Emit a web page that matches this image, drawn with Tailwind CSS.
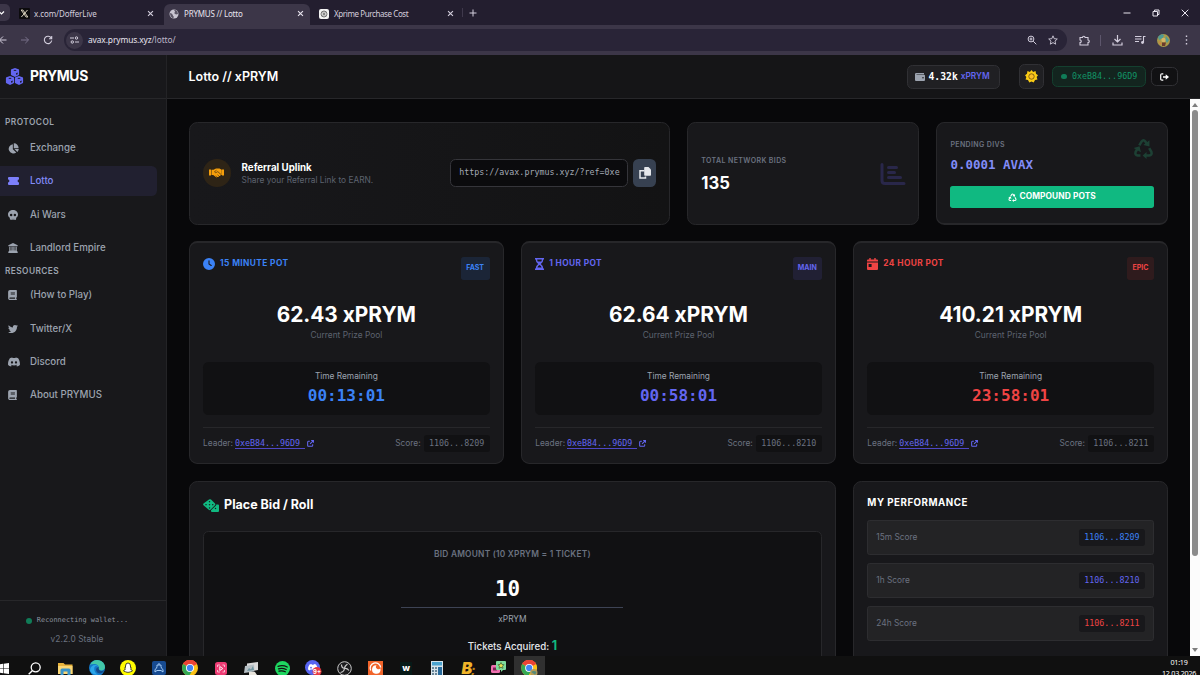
<!DOCTYPE html>
<html lang="en" class="text-[11.111px]">
<head>
<meta charset="utf-8">
<title>PRYMUS // Lotto</title>
<script src="https://cdn.jsdelivr.net/npm/@tailwindcss/browser@4"></script>
</head>
<body class="w-[1200px] h-[675px] overflow-hidden bg-[#09090b] font-['Inter',sans-serif] flex flex-col">
<svg class="hidden">
  <symbol id="book" viewBox="0 0 448 512"><path fill-rule="evenodd" d="M96 0C43 0 0 43 0 96v320c0 53 43 96 96 96h320c18 0 32-14 32-32s-14-32-32-32v-64c18 0 32-14 32-32V32c0-18-14-32-32-32H96zm0 384h256v64H96c-18 0-32-14-32-32s14-32 32-32zm32-240c0-9 7-16 16-16h192c9 0 16 7 16 16s-7 16-16 16H144c-9 0-16-7-16-16zm16 48h192c9 0 16 7 16 16s-7 16-16 16H144c-9 0-16-7-16-16s7-16 16-16z"/></symbol>
  <symbol id="ext" viewBox="0 0 16 16"><path d="M6.500 3H3.200A1.700 1.700 0 0 0 1.500 4.700v8.100a1.700 1.700 0 0 0 1.700 1.700h8.100a1.700 1.700 0 0 0 1.700-1.700V9.500M9.500 1.300h5.200v5.200M14.500 1.500L7 9" fill="none" stroke="currentColor" stroke-width="2.400"/></symbol>
  <symbol id="recycle" viewBox="0 0 24 24"><path d="M7.200 8.500L9.900 3.900Q12 1 14.100 3.900L16 7.200M18.500 11.500l2.500 4.300Q22.200 19.500 18.500 20H13M8.500 20H5.500Q1.800 19.500 3 15.800L5.300 12" fill="none" stroke="currentColor" stroke-width="2.900"/><path d="M18.800 2.500v7.200l-7-1.700zM15.500 16v8l-4.500-4zM.7 11.500l6.800-2 1.500 6.800z" fill="currentColor"/></symbol>
  <symbol id="cube" viewBox="0 0 10 11"><path d="M5 0l4.300 1.600q.7.300.7 1v5.200q0 .7-.7 1L5 11 .7 8.800q-.7-.3-.7-1V2.600q0-.7.7-1z" fill="currentColor"/><path d="M5 2l2.200.9L5 3.800l-2.200-.9zM6.300 6.400l1.900-.8v1.900l-1.900.9z" fill="#18181b"/></symbol>
  <symbol id="chrome" viewBox="0 0 24 24"><circle cx="12" cy="12" r="12" fill="#fbc116"/><path d="M12 12L1.600 6a12 12 0 0 1 20.800 0z" fill="#ea4335"/><path d="M12 12L1.600 6a12 12 0 0 0 9 17.900L16 15z" fill="#34a853"/><path d="M1.600 6A12 12 0 0 1 22.400 6H12z" fill="#ea4335"/><circle cx="12" cy="12" r="6" fill="#fff"/><circle cx="12" cy="12" r="4.700" fill="#4285f4"/></symbol>
  <symbol id="x" viewBox="0 0 10 10"><path d="M1.500 1.500l7 7M8.500 1.500l-7 7" stroke="currentColor" stroke-width="1.600"/></symbol>
</svg>

<!-- Browser tab strip -->
<div class="h-[25px] shrink-0 bg-[#231e2f] flex items-end text-[8px] text-[#d3cedd] font-['Noto_Sans',sans-serif] tracking-[-0.1px]">
  <div class="w-[10px] h-[17px] mb-[4px] rounded-r-[5px] bg-[#3c3648] flex items-center"><svg class="w-[6px] h-[6px]" viewBox="0 0 6 6"><path d="M-1 1.500L1.500 4 4 1.500" fill="none" stroke="#fff" stroke-width="1.200"/></svg></div>
  <div class="w-[154px] h-[21px] pb-[2px] pl-[9px] pr-[10px] flex items-center">
    <svg class="w-[11px] h-[11px] mr-[4px]" viewBox="0 0 11 11"><rect width="11" height="11" rx="1" fill="#0c0b0d"/><path d="M2.200 2h1.700l4.900 7H7.100zM8.500 2L2.400 9" fill="none" stroke="#d8d0bc" stroke-width="1"/></svg>
    <span class="grow">x.com/DofferLive</span>
    <svg class="w-[7px] h-[7px]"><use href="#x"/></svg>
  </div>
  <div class="w-[146px] h-[21px] pb-[2px] pl-[5px] pr-[6px] flex items-center bg-[#3c3648] rounded-t-[6px] text-[#e8e4ee]">
    <svg class="w-[10px] h-[10px] mr-[5px]" viewBox="0 0 10 10"><circle cx="5" cy="5" r="4.500" fill="#c9c6d2"/><path d="M1 4q2 0 2.500 1.500T5 8l-1 1.300Q1 8 1 4zM5 1q2 2 0 3l2 1.500L9 5Q9 2 6.500 1z" fill="#5b5666"/></svg>
    <span class="grow tracking-[-0.2px]">PRYMUS // Lotto</span>
    <svg class="w-[7px] h-[7px]"><use href="#x"/></svg>
  </div>
  <div class="w-[152px] h-[21px] pb-[2px] pl-[9px] pr-[8px] flex items-center">
    <svg class="w-[10px] h-[10px] mr-[5px]" viewBox="0 0 10 10"><rect width="10" height="10" rx="2" fill="#f3f3f3"/><circle cx="5" cy="5" r="3" fill="none" stroke="#555" stroke-width=".8"/><path d="M3 3.500l4 3M5 2.500v5M3 6.500l4-3" stroke="#555" stroke-width=".6"/></svg>
    <span class="grow tracking-[-0.4px]">Xprime Purchase Cost</span>
    <svg class="w-[7px] h-[7px]"><use href="#x"/></svg>
  </div>
  <div class="w-px h-[9px] mb-[8px] bg-[#3f394c]"></div>
  <svg class="w-[8px] h-[8px] mb-[8px] ml-[6px]" viewBox="0 0 8 8"><path d="M4 .5v7M.5 4h7" stroke="#d3cedd" stroke-width="1"/></svg>
  <div class="grow"></div>
  <div class="h-[25px] flex items-center gap-[21px] pr-[11px]">
    <svg class="w-[8px] h-[8px]" viewBox="0 0 8 8"><path d="M.5 4h7" stroke="#e8e4ee"/></svg>
    <svg class="w-[8px] h-[8px]" viewBox="0 0 8 8"><path d="M1 2.500h4.500V7H1zM2.500 2.500V1H7v4.500H5.500" fill="none" stroke="#e8e4ee"/></svg>
    <svg class="w-[8px] h-[8px]" viewBox="0 0 8 8"><path d="M.7.7l6.600 6.600M7.300.7L.7 7.300" stroke="#e8e4ee"/></svg>
  </div>
</div>

<!-- Address bar -->
<div class="h-[30px] shrink-0 bg-[#3c3648] flex items-center text-[#d3cedd] font-['Noto_Sans',sans-serif]">
  <svg class="w-[8px] h-[10px] -ml-[1px]" viewBox="0 0 8 10"><path d="M7.500 5H1M4 1.500L.5 5 4 8.500" fill="none" stroke="currentColor"/></svg>
  <svg class="w-[10px] h-[10px] ml-[13px] text-[#78718a]" viewBox="0 0 10 10"><path d="M1 5h7.500M5.300 1.800L8.500 5 5.300 8.200" fill="none" stroke="currentColor"/></svg>
  <svg class="w-[10px] h-[10px] ml-[13px]" viewBox="0 0 10 10"><path d="M8.200 3A3.700 3.700 0 1 0 8.700 5.500M8.700 1v2.700H6" fill="none" stroke="currentColor" stroke-width="1.100"/></svg>
  <div class="ml-[11px] w-[1003px] h-[22px] rounded-full bg-[#292437] flex items-center pl-[2px] pr-[9px]">
    <div class="w-[17px] h-[17px] rounded-full bg-[#3c3648] flex items-center justify-center"><svg class="w-[9px] h-[8px]" viewBox="0 0 9 8"><path d="M0 2h4M5 6h4" stroke="currentColor"/><circle cx="6.500" cy="2" r="1.200" fill="none" stroke="currentColor"/><circle cx="2.300" cy="6" r="1.200" fill="none" stroke="currentColor"/></svg></div>
    <span class="ml-[5px] text-[8.400px] tracking-[-0.1px] grow text-[#e8e4ee]">avax.prymus.xyz<span class="text-[#bcb6c8]">/lotto/</span></span>
    <svg class="w-[10px] h-[10px]" viewBox="0 0 10 10"><circle cx="4" cy="4" r="2.900" fill="none" stroke="currentColor"/><path d="M6.200 6.200L9.300 9.300M2.500 4h3M4 2.500v3" stroke="currentColor" stroke-width="1"/></svg>
    <svg class="w-[10px] h-[10px] ml-[11px]" viewBox="0 0 10 10"><path d="M5 .8l1.200 2.900 3.100.3L7 6.100l.7 3.100L5 7.600 2.300 9.200 3 6.100.7 4l3.100-.3z" fill="none" stroke="currentColor" stroke-width=".9"/></svg>
  </div>
  <svg class="w-[11px] h-[11px] ml-[12px]" viewBox="0 0 11 11"><path d="M1 2.500h2.500a1.300 1.300 0 0 1 2.600 0H9V5a1.300 1.300 0 0 1 0 2.600V10H1V7.600a1.300 1.300 0 0 0 0-2.600z" fill="none" stroke="currentColor" stroke-width="1.100"/></svg>
  <div class="w-px h-[11px] ml-[10px] bg-[#5d566c]"></div>
  <svg class="w-[11px] h-[11px] ml-[11px]" viewBox="0 0 11 11"><path d="M5.500 0v6.500M2.500 4l3 3 3-3M1 7.500V10h9V7.500" fill="none" stroke="currentColor" stroke-width="1.200"/></svg>
  <svg class="w-[11px] h-[10px] ml-[12px]" viewBox="0 0 11 10"><path d="M0 1.500h6.500M0 4h6.500M0 6.500h4M8.500 7.500V1.500h2" fill="none" stroke="currentColor" stroke-width="1.100"/><circle cx="7.500" cy="7.500" r="1.400" fill="currentColor"/></svg>
  <svg class="w-[13px] h-[13px] ml-[11px]" viewBox="0 0 13 13"><circle cx="6.500" cy="6.500" r="6.500" fill="#a99a4a"/><path d="M1 3q3-4 6-2L6 4 2 6zM9 2l3 4-2 3-2-3z" fill="#4f9a93"/><circle cx="6.500" cy="6" r="2.200" fill="#d6b565"/><path d="M5 8.500h4l-1 3.500H5z" fill="#6b3b2c"/><path d="M1.500 7l3 2-1 2z" fill="#d9803e"/></svg>
  <svg class="w-[3px] h-[10px] ml-[15px]" viewBox="0 0 3 10"><path d="M.8.500h1.400v1.400H.8zM.8 4.300h1.400v1.400H.8zM.8 8.100h1.400v1.400H.8z" fill="currentColor"/></svg>
</div>

<!-- Application -->
<div class="h-[601px] shrink-0 flex overflow-hidden">
  <aside class="w-[167px] shrink-0 bg-[#18181b] border-r border-[#232326] flex flex-col text-[#9ca3af]">
    <div class="h-[44px] shrink-0 border-b border-[#27272a] flex items-center pl-[5px] text-white">
      <div class="w-[19px] flex flex-col items-center text-[#6366f1]">
        <svg class="w-[10px] h-[9px]"><use href="#cube"/></svg>
        <div class="flex -mt-[1px]"><svg class="w-[10px] h-[9px]"><use href="#cube"/></svg><svg class="w-[10px] h-[9px] -ml-px"><use href="#cube"/></svg></div>
      </div>
      <span class="ml-[6px] pt-[1px] text-xl font-bold tracking-[-0.35px]">PRYMUS</span>
    </div>
    <div class="h-[34px] pt-[17px] pl-[5px] text-xs leading-[13px] font-semibold tracking-[0.45px]">PROTOCOL</div>
    <nav class="flex flex-col gap-[3.400px] text-sm font-medium">
      <a class="h-[30px] flex items-center"><span class="w-[30px] pl-[8px]"><svg class="w-[11px] h-[11px]" viewBox="0 0 12 12" fill="currentColor"><path d="M5.300 1.300v5.400l3.700 3.700A5.100 5.100 0 1 1 5.300 1.300zM6.300.3a5 5 0 0 1 5.200 5.300H6.300zM7 6.600h4.800a5 5 0 0 1-1.600 3.200z"/></svg></span>Exchange</a>
      <a class="h-[30px] w-[157px] rounded-r-[5.500px] bg-[#212030] text-[#818cf8] flex items-center"><span class="w-[30px] pl-[8px]"><svg class="w-[11px] h-[8px]" viewBox="0 0 11 8" fill="#7c7ffa"><path d="M1 0h9q1 0 1 1v1.600a1.400 1.400 0 0 0 0 2.800V7q0 1-1 1H1Q0 8 0 7V5.400a1.400 1.400 0 0 0 0-2.800V1q0-1 1-1z"/></svg></span>Lotto</a>
      <a class="h-[30px] flex items-center"><span class="w-[30px] pl-[8px]"><svg class="w-[10px] h-[10px]" viewBox="0 0 512 512" fill="currentColor"><path fill-rule="evenodd" d="M416 398c58-42 96-104 96-174C512 100 397 0 256 0S0 100 0 224c0 70 38 132 96 174v66c0 26 22 48 48 48h48v-48c0-9 7-16 16-16s16 7 16 16v48h64v-48c0-9 7-16 16-16s16 7 16 16v48h48c26 0 48-22 48-48v-66zM96 256a64 64 0 1 1 128 0 64 64 0 1 1-128 0zm256-64a64 64 0 1 1 0 128 64 64 0 1 1 0-128z"/></svg></span>Ai Wars</a>
      <a class="h-[30px] flex items-center"><span class="w-[30px] pl-[8px]"><svg class="w-[10px] h-[10px]" viewBox="0 0 16 16" fill="currentColor"><path d="M8 0l7.500 3.500V5H.5V3.500zM2 6h2v6h1.500V6h2v6h1V6h2v6H12V6h2v6.500l1.500 1.500v2H.5v-2L2 12.500z"/></svg></span>Landlord Empire</a>
    </nav>
    <div class="h-[17px] pt-[2px] pl-[5px] text-xs leading-[13px] font-semibold tracking-[0.4px]">RESOURCES</div>
    <nav class="flex flex-col gap-[3.400px] text-sm font-medium">
      <a class="h-[30px] flex items-center"><span class="w-[30px] pl-[8px]"><svg class="w-[9px] h-[10px]" fill="currentColor"><use href="#book"/></svg></span>(How to Play)</a>
      <a class="h-[30px] flex items-center"><span class="w-[30px] pl-[8px]"><svg class="w-[10px] h-[10px]" viewBox="0 0 512 512" fill="currentColor"><path d="M459.370 151.716c.325 4.548.325 9.097.325 13.645 0 138.720-105.583 298.558-298.558 298.558-59.452 0-114.680-17.219-161.137-47.106 8.447.974 16.568 1.299 25.340 1.299 49.055 0 94.213-16.568 130.274-44.832-46.132-.975-84.792-31.188-98.112-72.772 6.498.974 12.995 1.624 19.818 1.624 9.421 0 18.843-1.300 27.614-3.573-48.081-9.747-84.143-51.980-84.143-102.985v-1.299c13.969 7.797 30.214 12.670 47.431 13.319-28.264-18.843-46.781-51.005-46.781-87.391 0-19.492 5.197-37.360 14.294-52.954 51.655 63.675 129.300 105.258 216.365 109.807-1.624-7.797-2.599-15.918-2.599-24.040 0-57.828 46.782-104.934 104.934-104.934 30.213 0 57.502 12.670 76.670 33.137 23.715-4.548 46.456-13.320 66.599-25.340-7.798 24.366-24.366 44.833-46.132 57.827 21.117-2.273 41.584-8.122 60.426-16.243-14.292 20.791-32.161 39.308-52.628 54.253z"/></svg></span>Twitter/X</a>
      <a class="h-[30px] flex items-center"><span class="w-[30px] pl-[8px]"><svg class="w-[12px] h-[10px]" viewBox="0 0 24 20" fill="currentColor"><path fill-rule="evenodd" d="M20.300 2.400A19 19 0 0 0 15.400.9l-.7 1.300a18 18 0 0 0-5.400 0L8.600.9a19 19 0 0 0-4.900 1.500C.6 7-.3 11.600.2 16a20 20 0 0 0 6 3l1.200-2-1.900-.9.500-.4a14 14 0 0 0 12 0l.5.400-1.900.9 1.200 2a20 20 0 0 0 6-3c.5-5.200-.9-9.700-3.500-13.600zM8 13.300c-1.200 0-2.200-1.100-2.200-2.400S6.800 8.500 8 8.500s2.200 1.100 2.200 2.400-1 2.400-2.200 2.400zm8 0c-1.200 0-2.200-1.100-2.200-2.400s1-2.400 2.200-2.400 2.200 1.100 2.200 2.400-1 2.400-2.200 2.400z"/></svg></span>Discord</a>
      <a class="h-[30px] flex items-center"><span class="w-[30px] pl-[8px]"><svg class="w-[9px] h-[10px]" fill="currentColor"><use href="#book"/></svg></span>About PRYMUS</a>
    </nav>
    <div class="mt-auto h-[56px] border-t border-[#27272a] flex flex-col items-center pt-[13px] pr-[12px]">
      <div class="h-[13px] flex items-center gap-[5px] font-['DejaVu_Sans_Mono',monospace] text-[6.900px] font-medium text-[#8b919d]"><span class="w-[6px] h-[6px] rounded-full bg-[#107c58]"></span>Reconnecting wallet...</div>
      <div class="mt-[6px] text-xs leading-[13px] text-[#6b7280] tracking-[0.1px]">v2.2.0 Stable</div>
    </div>
  </aside>

  <div class="grow flex flex-col min-w-0">
    <header class="h-[44px] shrink-0 bg-[#151517] border-b border-[#27272a] flex items-center pl-[21.500px] pr-[22px] text-white">
      <h1 class="text-lg font-semibold grow pt-px">Lotto // xPRYM</h1>
      <div class="w-[93px] h-[24px] rounded-[5.500px] border border-[#303034] bg-[#202023] flex items-center pl-[7px] mr-[19.500px]">
        <svg class="w-[10px] h-[8px] mr-[4px]" viewBox="0 0 10 8"><path d="M1.200 0H9v1.200H1.500v.5H9q1 0 1 1V7q0 1-1 1H1Q0 8 0 7V1.200Q0 0 1.200 0z" fill="#9ca3af"/><circle cx="8" cy="4.800" r=".8" fill="#202023"/></svg>
        <span class="font-['DejaVu_Sans_Mono',monospace] font-bold text-sm">4.32k</span><span class="ml-[3px] text-xs font-semibold text-[#6366f1]">xPRYM</span>
      </div>
      <div class="w-[25px] h-[25px] rounded-[5.500px] border border-[#303034] bg-[#202023] flex items-center justify-center mr-[8px]">
        <svg class="w-[13px] h-[13px]" viewBox="0 0 24 24"><path d="M12 0l3 3.800L19.500 2l.800 4.800L24 9.500 21.500 13l1.500 4.500-4.500 1L16 23l-4-2-4 2-2.500-4.500-4.500-1L2.500 13 0 9.500l3.700-2.700L4.500 2 9 3.800z" fill="#facc15"/><circle cx="12" cy="12" r="5" fill="#fbbf24" stroke="#5a4208" stroke-width="1.300"/></svg>
      </div>
      <div class="w-[94px] h-[21px] rounded-[5.500px] border border-[#14402f] bg-[#13251f] flex items-center pl-[8px] mr-[5px] font-['DejaVu_Sans_Mono',monospace] text-xs text-[#129467]"><span class="w-[5.500px] h-[5.500px] rounded-full bg-[#107c58] mr-[5.500px]"></span>0xeB84...96D9</div>
      <div class="w-[27px] h-[19px] rounded-[5.500px] border border-[#303034] bg-[#111113] flex items-center justify-center">
        <svg class="w-[9px] h-[8px]" viewBox="0 0 9 8"><path d="M3.300.800H2Q.7.800.7 2v4Q.7 7.200 2 7.200h1.300" fill="none" stroke="#fff" stroke-width="1.200"/><path d="M3 3.200h2.700V1.200L9 4 5.700 6.800v-2H3z" fill="#fff"/></svg>
      </div>
    </header>

    <div class="grow flex min-h-0">
      <main class="grow bg-[#08080a] pl-[21.600px] pr-[21.600px] pt-[23px] flex flex-col overflow-hidden">
        <!-- Summary cards -->
        <section class="h-[103px] shrink-0 grid grid-cols-4 gap-[16.600px]">
          <div class="col-span-2 rounded-xl border border-[#27272a] bg-linear-to-r from-[#18181b] to-[#131314] flex items-center px-[13px] pb-px">
            <div class="w-[28px] h-[28px] rounded-full bg-[#2e2416] flex items-center justify-center shrink-0">
              <svg class="w-[15px] h-[10px]" viewBox="0 0 30 20"><path d="M0 3h4v12H0zM26 3h4v12h-4z" fill="#f59e0b"/><path d="M5 3.500h4L14 1h7l4.500 2.500V14h-2.300l-.7 1.800-2.200.4-1.400 1.900-2.400-.2-1.500 1.300L8.500 14H5z" fill="#f59e0b"/><path d="M15 4.500L11 7.500q1.500 3 4.500 1l2-1.300L24 13M13.500 15.500l2 1.800M17 13.500l2.500 2" fill="none" stroke="#2e2416" stroke-width="1.300"/></svg>
            </div>
            <div class="ml-[11px] grow">
              <div class="text-sm leading-[13px] font-bold text-white">Referral Uplink</div>
              <div class="text-xs leading-[12px] text-[#5d636f]">Share your Referral Link to EARN.</div>
            </div>
            <div class="w-[178px] h-[28px] rounded-[5.500px] border border-[#35353a] bg-[#0b0b0d] flex items-center pl-[8px] font-['DejaVu_Sans_Mono',monospace] text-xs text-[#a3a9b4] whitespace-nowrap">https://avax.prymus.xyz/?ref=0xe</div>
            <div class="ml-[5px] w-[23px] h-[28px] rounded-[5.500px] bg-[#374151] flex items-center justify-center">
              <svg class="w-[12px] h-[12px]" viewBox="0 0 12 12"><path d="M5.500 3.700H1V11h5.500V9.500" fill="none" stroke="#e5e7eb" stroke-width="1.500"/><path d="M6 0h3.500L12 2.500V8q0 .8-.8.8H6q-.8 0-.8-.8V.800Q5.200 0 6 0z" fill="#e5e7eb"/></svg>
            </div>
          </div>
          <div class="rounded-xl border border-[#27272a] bg-[#18181b] flex items-center pl-[13.500px] pr-[12.500px]">
            <div class="grow"><div class="text-[7px] leading-[11px] font-semibold tracking-[0.38px] text-[#6b7280]">TOTAL NETWORK BIDS</div>
            <div class="mt-[7px] text-2xl leading-[20px] font-bold text-white">135</div></div>
            <svg class="w-[26px] h-[22px]" viewBox="0 0 25 22"><path d="M1.500 1.500v16q0 3 3 3H23.500M8 4.500h8M8 9.500h6M8 14.500h12" fill="none" stroke="#29274a" stroke-width="3" stroke-linecap="round"/></svg>
          </div>
          <div class="rounded-xl border border-b-2 border-[#27272a] bg-[#18181b] px-[13.500px] pt-[15px]">
            <div class="flex justify-between h-[48px]">
              <div><div class="pt-[2px] text-[7px] leading-[10px] font-semibold tracking-[0.38px] text-[#6b7280]">PENDING DIVS</div>
              <div class="mt-[6px] font-['DejaVu_Sans_Mono',monospace] text-lg leading-[18px] font-bold text-[#818cf8]">0.0001 AVAX</div></div>
              <svg class="w-[21px] h-[21px] text-[#1d4034]"><use href="#recycle"/></svg>
            </div>
            <div class="h-[22px] rounded-[2.700px] bg-[#10b981] flex items-center justify-center gap-[2px] text-xs font-bold tracking-[0.1px] text-white"><svg class="w-[9px] h-[9px]"><use href="#recycle"/></svg>COMPOUND POTS</div>
          </div>
        </section>

        <!-- Prize pots -->
        <section class="mt-[16px] h-[223px] shrink-0 grid grid-cols-3 gap-[16.600px]">
          <div class="rounded-xl border border-t-2 border-[#27272a] bg-[#18181b] px-[13.500px] pt-[14px] flex flex-col">
            <div class="h-[23px] flex justify-between text-[#3b82f6]">
              <div class="h-[13px] flex items-center gap-[5px] text-xs font-bold tracking-[0.4px]"><svg class="w-[12px] h-[12px]" viewBox="0 0 512 512" fill="currentColor"><path fill-rule="evenodd" d="M256 0a256 256 0 1 1 0 512A256 256 0 1 1 256 0zM232 120V256c0 8 4 15.500 10.700 20l96 64c11 7.400 25.900 4.400 33.300-6.700s4.400-25.900-6.700-33.300L280 243.200V120c0-13.300-10.700-24-24-24s-24 10.700-24 24z"/></svg>15 MINUTE POT</div>
              <div class="w-[29px] h-[23px] rounded-[2.700px] bg-[#1b2537] flex items-center justify-center text-[7px] font-bold">FAST</div>
            </div>
            <div class="mt-[21px] h-[28px] leading-[28px] text-center text-[20.830px] font-bold text-white">62.43 xPRYM</div>
            <div class="text-center text-xs leading-[13px] text-[#5d636f]">Current Prize Pool</div>
            <div class="mt-[20px] h-[53px] shrink-0 rounded-[5.500px] bg-[#111113] text-center pt-[8px]">
              <div class="text-xs leading-[13px] text-[#9ca3af]">Time Remaining</div>
              <div class="font-['DejaVu_Sans_Mono',monospace] text-[16px] leading-[26px] font-bold text-[#3b82f6]">00:13:01</div>
            </div>
            <div class="mt-[12px] border-t border-[#27272a] pt-[7px] flex justify-between text-xs text-[#6b7280]">
              <div class="h-[17px] flex items-center">Leader:<span class="ml-[2px] w-[70px] h-[11px] border-b border-[#4f46c5] leading-[11px] font-['DejaVu_Sans_Mono',monospace] text-[#6366f1]">0xeB84...96D9</span><svg class="w-[7px] h-[7px] ml-[2px] text-[#6366f1]"><use href="#ext"/></svg></div>
              <div class="h-[17px] flex items-center">Score:<span class="ml-[3px] w-[66px] h-[17px] leading-[17px] text-center rounded-[2.700px] bg-[#111113] font-['DejaVu_Sans_Mono',monospace]">1106...8209</span></div>
            </div>
          </div>
          <div class="rounded-xl border border-t-2 border-[#27272a] bg-[#18181b] px-[13.500px] pt-[14px] flex flex-col">
            <div class="h-[23px] flex justify-between text-[#6366f1]">
              <div class="h-[13px] flex items-center gap-[5px] text-xs font-bold tracking-[0.4px]"><svg class="w-[9px] h-[12px]" viewBox="0 0 9 12" fill="currentColor"><path fill-rule="evenodd" d="M0 0h9v1.500H8.300Q8.300 4.500 5.800 6q2.500 1.500 2.500 4.500H9V12H0v-1.500h.7Q.7 7.500 3.200 6 .7 4.500.7 1.500H0zM2.200 1.500q0 1 .5 1.900h3.600q.5-.9.5-1.900zM4.500 6.900Q2.900 7.500 2.400 9.500h4.200Q6.100 7.500 4.500 6.900z"/></svg>1 HOUR POT</div>
              <div class="w-[29px] h-[23px] rounded-[2.700px] bg-[#212034] flex items-center justify-center text-[7px] font-bold">MAIN</div>
            </div>
            <div class="mt-[21px] h-[28px] leading-[28px] text-center text-[20.830px] font-bold text-white">62.64 xPRYM</div>
            <div class="text-center text-xs leading-[13px] text-[#5d636f]">Current Prize Pool</div>
            <div class="mt-[20px] h-[53px] shrink-0 rounded-[5.500px] bg-[#111113] text-center pt-[8px]">
              <div class="text-xs leading-[13px] text-[#9ca3af]">Time Remaining</div>
              <div class="font-['DejaVu_Sans_Mono',monospace] text-[16px] leading-[26px] font-bold text-[#6366f1]">00:58:01</div>
            </div>
            <div class="mt-[12px] border-t border-[#27272a] pt-[7px] flex justify-between text-xs text-[#6b7280]">
              <div class="h-[17px] flex items-center">Leader:<span class="ml-[2px] w-[70px] h-[11px] border-b border-[#4f46c5] leading-[11px] font-['DejaVu_Sans_Mono',monospace] text-[#6366f1]">0xeB84...96D9</span><svg class="w-[7px] h-[7px] ml-[2px] text-[#6366f1]"><use href="#ext"/></svg></div>
              <div class="h-[17px] flex items-center">Score:<span class="ml-[3px] w-[66px] h-[17px] leading-[17px] text-center rounded-[2.700px] bg-[#111113] font-['DejaVu_Sans_Mono',monospace]">1106...8210</span></div>
            </div>
          </div>
          <div class="rounded-xl border border-t-2 border-[#27272a] bg-[#18181b] px-[13.500px] pt-[14px] flex flex-col">
            <div class="h-[23px] flex justify-between text-[#ef4444]">
              <div class="h-[13px] flex items-center gap-[5px] text-xs font-bold tracking-[0.4px]"><svg class="w-[11px] h-[12px]" viewBox="0 0 11 12" fill="currentColor"><path fill-rule="evenodd" d="M2.300 0h1.400v1.500h3.600V0h1.400v1.500H10q1 0 1 1v1H0v-1q0-1 1-1h1.300zM0 4.500h11V11q0 1-1 1H1q-1 0-1-1zM1.600 6v3h3V6z"/></svg>24 HOUR POT</div>
              <div class="w-[27px] h-[23px] rounded-[2.700px] bg-[#2f1b1d] flex items-center justify-center text-[7px] font-bold">EPIC</div>
            </div>
            <div class="mt-[21px] h-[28px] leading-[28px] text-center text-[20.830px] font-bold text-white">410.21 xPRYM</div>
            <div class="text-center text-xs leading-[13px] text-[#5d636f]">Current Prize Pool</div>
            <div class="mt-[20px] h-[53px] shrink-0 rounded-[5.500px] bg-[#111113] text-center pt-[8px]">
              <div class="text-xs leading-[13px] text-[#9ca3af]">Time Remaining</div>
              <div class="font-['DejaVu_Sans_Mono',monospace] text-[16px] leading-[26px] font-bold text-[#ef4444]">23:58:01</div>
            </div>
            <div class="mt-[12px] border-t border-[#27272a] pt-[7px] flex justify-between text-xs text-[#6b7280]">
              <div class="h-[17px] flex items-center">Leader:<span class="ml-[2px] w-[70px] h-[11px] border-b border-[#4f46c5] leading-[11px] font-['DejaVu_Sans_Mono',monospace] text-[#6366f1]">0xeB84...96D9</span><svg class="w-[7px] h-[7px] ml-[2px] text-[#6366f1]"><use href="#ext"/></svg></div>
              <div class="h-[17px] flex items-center">Score:<span class="ml-[3px] w-[66px] h-[17px] leading-[17px] text-center rounded-[2.700px] bg-[#111113] font-['DejaVu_Sans_Mono',monospace]">1106...8211</span></div>
            </div>
          </div>
        </section>

        <!-- Bid form and personal scores -->
        <section class="mt-[16.500px] h-[240px] shrink-0 grid grid-cols-3 gap-[16.600px]">
          <div class="col-span-2 rounded-xl border border-[#27272a] bg-[#18181b] px-[13.500px] pt-[13.500px]">
            <div class="h-[20px] flex items-center gap-[5px] text-lg font-bold text-white">
              <svg class="w-[16px] h-[13px]" viewBox="0 0 32 26"><path fill-rule="evenodd" d="M12 1q2-1.500 4 0l8 8q1.500 1.500 0 3.500l-9 9q-1.500 1.500-3.500 0L1 12.500Q-.5 11 1 9zM13 4a1.300 1.300 0 1 0 .1 0zM6 10a1.300 1.300 0 1 0 .1 0zM13 10a1.300 1.300 0 1 0 .1 0zM19.500 10a1.300 1.300 0 1 0 .1 0zM13 16.500a1.300 1.300 0 1 0 .1 0z" fill="#10b981"/><path fill-rule="evenodd" d="M26.500 11H30q2 0 2 2v11q0 2-2 2H18q-2 0-2-2v-1.500l9.500-9q1-1 1-2.500zM25 17.500a1.300 1.300 0 1 0 .1 0z" fill="#10b981"/></svg>Place Bid / Roll
            </div>
            <div class="mt-[15.500px] h-[200px] rounded-[5.500px] border border-[#27272a] bg-[#111113] flex flex-col items-center pt-[16px]">
              <div class="text-xs leading-[13px] font-semibold text-[#6b7280] tracking-[0.230px]">BID AMOUNT (10 XPRYM = 1 TICKET)</div>
              <div class="mt-[11px] w-[222px] h-[36px] pr-[10px] border-b border-[#3d4354] text-center font-['DejaVu_Sans_Mono',monospace] text-[20.830px] leading-[35px] font-bold text-white">10</div>
              <div class="mt-[5px] text-xs leading-[13px] text-[#9ca3af]">xPRYM</div>
              <div class="mt-[12px] text-sm leading-[16px] font-medium text-[#e5e7eb]">Tickets Acquired: <span class="text-lg leading-[16px] font-bold text-[#10b981]">1</span></div>
            </div>
          </div>
          <div class="rounded-xl border border-[#27272a] bg-[#18181b] px-[13.500px] pt-[14px] text-xs text-[#6b7280]">
            <div class="text-sm leading-[13px] font-bold tracking-[0.5px] text-white">MY PERFORMANCE</div>
            <div class="mt-[11.500px] flex flex-col gap-[8px]">
              <div class="h-[35px] rounded-[2.700px] border border-[#2d2d30] bg-[#232325] flex items-center justify-between px-[8px]">15m Score<span class="w-[66px] h-[17px] leading-[17px] text-center rounded-[2.700px] bg-[#18181b] font-['DejaVu_Sans_Mono',monospace] text-[#3b82f6]">1106...8209</span></div>
              <div class="h-[35px] rounded-[2.700px] border border-[#2d2d30] bg-[#232325] flex items-center justify-between px-[8px]">1h Score<span class="w-[66px] h-[17px] leading-[17px] text-center rounded-[2.700px] bg-[#18181b] font-['DejaVu_Sans_Mono',monospace] text-[#6366f1]">1106...8210</span></div>
              <div class="h-[35px] rounded-[2.700px] border border-[#2d2d30] bg-[#232325] flex items-center justify-between px-[8px]">24h Score<span class="w-[66px] h-[17px] leading-[17px] text-center rounded-[2.700px] bg-[#18181b] font-['DejaVu_Sans_Mono',monospace] text-[#ef4444]">1106...8211</span></div>
            </div>
          </div>
        </section>
      </main>
      <!-- Page scrollbar -->
      <div class="w-[10px] shrink-0 bg-[#fcfcfc] flex flex-col items-center py-[4px]">
        <svg class="w-[6px] h-[4px]" viewBox="0 0 6 4"><path d="M3 0l3 4H0z" fill="#7d7d7d"/></svg>
        <div class="mt-[3px] w-[6px] h-[446px] rounded-full bg-[#8b8b8b]"></div>
        <svg class="w-[6px] h-[4px] mt-auto" viewBox="0 0 6 4"><path d="M3 4l3-4H0z" fill="#7d7d7d"/></svg>
      </div>
    </div>
  </div>
</div>

<!-- Windows taskbar -->
<div class="h-[19px] shrink-0 bg-[#101010] flex overflow-hidden">
  <div class="-ml-[11.500px] flex h-[24px] items-center">
    <div class="w-[30.940px] flex justify-center"><svg class="w-[11px] h-[11px]" viewBox="0 0 11 11" fill="#fff"><path d="M0 1.500L5 .8v4.400H0zM5.600.7L11 0v5.200H5.600zM0 5.800h5v4.400l-5-.7zM5.600 5.800H11V11l-5.400-.7z"/></svg></div>
    <div class="w-[30.940px] flex justify-center"><svg class="w-[13px] h-[13px]" viewBox="0 0 13 13"><circle cx="7.700" cy="5.300" r="4.500" fill="none" stroke="#fff" stroke-width="1.300"/><path d="M4.500 8.500L.7 12.300" stroke="#fff" stroke-width="1.400"/></svg></div>
    <div class="w-[30.940px] flex justify-center"><svg class="w-[15px] h-[13px]" viewBox="0 0 15 13"><path d="M0 1h5.500L7 2.500h7.500V12H0z" fill="#e8b33c"/><path d="M0 4h14.500v8H0z" fill="#fbd775"/><path d="M2.500 8q0-1.500 1.500-1.500h7q1.500 0 1.500 1.500v5h-3V9.500h-4V13h-3z" fill="#3a94c9"/></svg></div>
    <div class="w-[30.940px] flex justify-center"><svg class="w-[16px] h-[16px]" viewBox="0 0 16 16"><circle cx="8" cy="8" r="8" fill="#1478c8"/><path d="M1 5Q4-1 10 .300 16 2 16 7.500q-.5 3-4 3-3.500-.5-2-3Q9 4 5.500 4 2 4 1 5z" fill="#42c7a8"/><path d="M5.500 7Q4 12 9 14.800 3 15 1 10.500 1.500 5 6.500 5 9 5.500 9.500 7 7 5 5.500 7z" fill="#2ba6e8"/><path d="M9.500 7q0 4 3 4 2 0 3.200-1.500Q14.500 13 11 13.500 7.500 13 7 10q0-2.500 2.500-3z" fill="#124a8c"/></svg></div>
    <div class="w-[30.940px] flex justify-center"><svg class="w-[16px] h-[16px]" viewBox="0 0 16 16"><circle cx="8" cy="8" r="8" fill="#fffc00"/><path d="M8 3Q5.500 3 5.500 6v1.500L4.500 8l1 .8Q5 10 3.500 10.700q.5.700 1.700.8.300.8 1.200.6Q7.300 12 8 12.700q.7-.7 1.600-.6.900.200 1.200-.6 1.200-.100 1.700-.8Q11 10 10.500 8.800l1-.8-1-.5V6Q10.500 3 8 3z" fill="#fff" stroke="#111" stroke-width=".8"/></svg></div>
    <div class="w-[30.940px] flex justify-center"><svg class="w-[14px] h-[14px]" viewBox="0 0 14 14"><rect width="14" height="14" rx="2" fill="#174b91"/><path d="M3 11V8.500Q5 7.500 5 5.500V4H9v1.500q0 2 2 3V11L9 9.500H5zM7 2v2" fill="none" stroke="#a4cbf5" stroke-width="1"/></svg></div>
    <div class="w-[30.940px] flex justify-center"><svg class="w-[16px] h-[16px]"><use href="#chrome"/></svg></div>
    <div class="w-[30.940px] flex justify-center"><svg class="w-[12px] h-[13px]" viewBox="0 0 12 13"><rect width="12" height="13" rx="2.500" fill="#ee3c74"/><path d="M2.500 5V3H5M7.500 3H9.500V5M9.500 8v2H7.500M5 10H2.500V8" fill="none" stroke="#ffd4e2" stroke-width=".8"/><path d="M4.800 4.500l3 2-3 2z" fill="none" stroke="#fff" stroke-width=".9"/></svg></div>
    <div class="w-[30.940px] flex justify-center"><svg class="w-[15px] h-[13px]" viewBox="0 0 15 13"><path d="M3 1.500L14 0v8L3 10z" fill="#dadada"/><path d="M1 4l9-1.500.5 7L0 11z" fill="#b7c0c5"/><path d="M3 9l2-3 2 1.500L9 4l1 4z" fill="#6f95a0"/><path d="M5 10h6l2 3H5z" fill="#e8e4dc"/></svg></div>
    <div class="w-[30.940px] flex justify-center"><svg class="w-[15px] h-[15px]" viewBox="0 0 15 15"><circle cx="7.500" cy="7.500" r="7.500" fill="#1ed760"/><path d="M3 5.300q5-1.500 9.200.7M3.500 7.800q4-1.200 7.700.7M4 10.200q3.500-.9 6.300.6" fill="none" stroke="#101010" stroke-width="1.300" stroke-linecap="round"/></svg></div>
    <div class="w-[30.940px] flex justify-center"><svg class="w-[17px] h-[16px]" viewBox="0 0 17 16"><circle cx="7.500" cy="7.500" r="7.500" fill="#5865f2"/><path d="M3 9.500Q3 6.500 4.500 4.500l2-.5.4.700h1.700L9 4l2 .5q1.500 2 1.500 5l-2 1-.8-1H5.500l-.7 1z" fill="#fff"/><circle cx="6" cy="7.700" r=".9" fill="#5865f2"/><circle cx="12" cy="11.500" r="4.500" fill="#e53945"/><text x="12" y="13.500" text-anchor="middle" font-family="Inter" font-weight="700" font-size="6" fill="#fff">9+</text></svg></div>
    <div class="w-[30.940px] flex justify-center"><svg class="w-[15px] h-[15px]" viewBox="0 0 15 15"><circle cx="7.500" cy="7.500" r="6.800" fill="#1b1b1d" stroke="#c9c9c9" stroke-width="1"/><path d="M4.500 3.500q0 3.500 3 4 2.500-.5 4.500 2M7.500 7.500Q7 11 3.500 11.500M10.500 3Q8 4.500 7.500 7.500" fill="none" stroke="#c9c9c9" stroke-width="1.200"/></svg></div>
    <div class="w-[30.940px] flex justify-center"><svg class="w-[15px] h-[15px]" viewBox="0 0 15 15"><rect width="15" height="15" fill="#f1642a"/><path d="M2.700 9.500A5.300 5.300 0 1 1 12.700 6.500" fill="none" stroke="#fff" stroke-width="1.300"/><path d="M12.500 9.500A4.300 4.300 0 1 1 8.500 4.200 2.300 2.300 0 1 0 12.500 7.200z" fill="#fff"/></svg></div>
    <div class="w-[30.940px] flex justify-center"><div class="w-[12px] h-[13px] bg-[#071a18] text-white text-[9px] leading-[11px] font-extrabold text-center">w</div></div>
    <div class="w-[30.940px] flex justify-center"><svg class="w-[12px] h-[15px]" viewBox="0 0 12 15"><rect width="12" height="15" fill="#d7e3ea"/><rect x="1" y="1" width="10" height="3.500" fill="#4aa3cf"/><path d="M1 6h2v2H1zM4 6h2v2H4zM1 9h2v2H1zM4 9h2v2H4zM1 12h2v2H1zM4 12h2v2H4z" fill="#6a8799"/><path d="M7 6h4v8H7z" fill="#276a9c"/></svg></div>
    <div class="w-[30.940px] flex justify-center"><div class="h-[15px] text-[#f0b429] text-[16px] leading-[14px] font-black italic tracking-[-1px]">B<span class="text-[#b98212] text-[12px]">;</span></div></div>
    <div class="w-[30.940px] flex justify-center"><svg class="w-[15px] h-[14px]" viewBox="0 0 15 14"><rect x="0" y="4" width="9" height="8" rx="1.500" fill="#ee6fae"/><rect x="2" y="6.500" width="4" height="3" fill="#7b2452"/><path d="M6 0h8q1 0 1 1v7q0 1-1 1h-2l-2 2V9H6Q5 9 5 8V1q0-1 1-1z" fill="#7fdc9c"/><path d="M10 1.500l1 2 2 .2-1.500 1.500.5 2.100-2-1-2 1 .5-2.100L7 3.700l2-.2z" fill="#ece252" stroke="#345c31" stroke-width=".7"/></svg></div>
    <div class="w-[30.940px] h-[24px] bg-[#303030] flex justify-center items-center"><svg class="w-[17px] h-[16px]" viewBox="0 0 25 24"><use href="#chrome" width="24" height="24"/><circle cx="19" cy="19" r="5.500" fill="#b29a58"/><path d="M15 18q4-3 8 0l-2 4z" fill="#558a78"/></svg></div>
  </div>
  <div class="ml-auto w-[40px] mr-[1px] text-center text-white text-[7.200px] leading-[11px] pt-[1px] font-['Noto_Sans',sans-serif] tracking-[-0.25px]"><div>01:19</div><div>12.03.2026</div></div>
</div>
</body>
</html>
